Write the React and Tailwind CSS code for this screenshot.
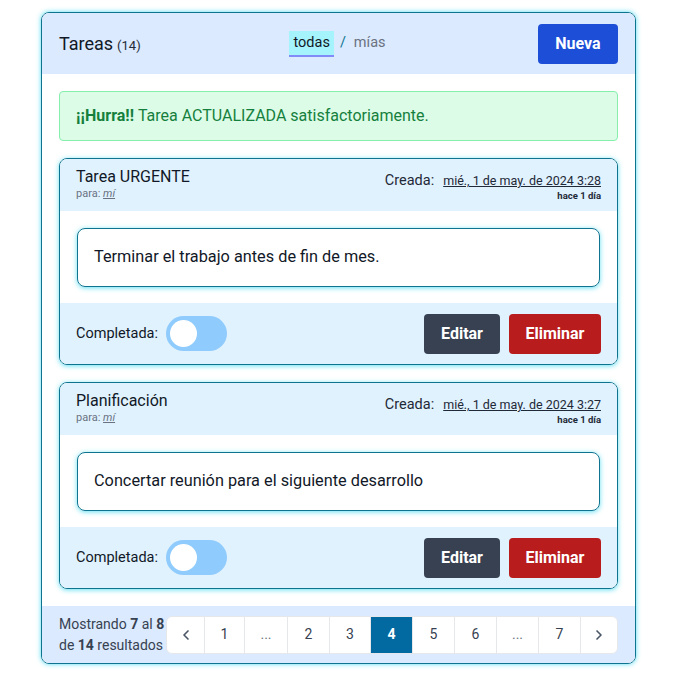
import React from "react";
import { ChevronLeft, ChevronRight } from "lucide-react";

function Toggle() {
  return (
    <div className="w-[61px] h-[35px] rounded-full bg-[#8fcbfd] flex items-center px-[4px]">
      <div className="w-[27px] h-[27px] rounded-full bg-white" />
    </div>
  );
}

function TaskCard({ title, date, text }) {
  return (
    <div className="rounded-lg border border-[#0e7490] shadow-[0_1px_5px_rgba(34,211,238,0.7)] overflow-hidden">
      <div className="bg-[#e0f2fe] h-[52px] px-4 flex justify-between items-start pt-[8px]">
        <div className="flex flex-col">
          <span className="text-[16px] leading-[20px] text-[#111827]">{title}</span>
          <span className="text-[11px] leading-[14px] text-gray-500">
            para: <span className="italic underline">mí</span>
          </span>
        </div>
        <div className="flex flex-col items-end pt-[5px]">
          <div className="flex items-baseline gap-[9px]">
            <span className="text-[14.5px] leading-[17px] text-[#1f2937]">Creada:</span>
            <span className="text-[12.5px] leading-[15px] text-[#1f2937] underline">{date}</span>
          </div>
          <span className="text-[9.5px] leading-[13px] font-bold text-[#1f2937]">hace 1 día</span>
        </div>
      </div>
      <div className="bg-white px-[17px] pt-[17px] pb-[16px]">
        <div className="h-[59px] rounded-lg border border-[#0e7490] shadow-[0_1px_5px_rgba(34,211,238,0.7)] px-4 flex items-center">
          <span className="text-[16.3px] text-[#111827]">{text}</span>
        </div>
      </div>
      <div className="bg-[#e0f2fe] h-[61px] px-4 flex items-center justify-between">
        <div className="flex items-center gap-[8px]">
          <span className="text-[14.5px] text-[#111827]">Completada:</span>
          <Toggle />
        </div>
        <div className="flex items-center gap-[9px]">
          <button className="h-[40px] w-[76px] rounded bg-[#374151] text-white font-bold text-[16px]">Editar</button>
          <button className="h-[40px] w-[92px] rounded bg-[#b91c1c] text-white font-bold text-[16px]">Eliminar</button>
        </div>
      </div>
    </div>
  );
}

export default function App() {
  const pages = [
    { l: "<", w: "w-[37px]", arrow: "left" },
    { l: "1", w: "w-[40px]" },
    { l: "...", w: "w-[43px]", dots: true },
    { l: "2", w: "w-[42px]" },
    { l: "3", w: "w-[41px]" },
    { l: "4", w: "w-[42px]", active: true },
    { l: "5", w: "w-[42px]" },
    { l: "6", w: "w-[42px]" },
    { l: "...", w: "w-[42px]", dots: true },
    { l: "7", w: "w-[42px]" },
    { l: ">", w: "w-[37px]", arrow: "right" },
  ];
  return (
    <div className="w-full min-h-[676px] bg-white pt-[12px] font-['Roboto',sans-serif]">
      <div className="w-[595px] ml-[41px] rounded-lg border border-[#0e7490] shadow-[0_0_5px_rgba(34,211,238,0.8)] overflow-hidden">
        <div className="bg-[#dbeafe] h-[61px] px-[17px] flex items-center justify-between">
          <div className="flex items-baseline gap-[4px] w-[200px]">
            <span className="text-[18px] text-[#111827]">Tareas</span>
            <span className="text-[13px] text-[#1f2937]">(14)</span>
          </div>
          <div className="flex items-center gap-[6px] text-[14.5px]">
            <span className="bg-[#a5f3fc] border-b-2 border-[#818cf8] px-[4px] h-[26px] flex items-center text-[#111827]">todas</span>
            <span className="text-[#0e7490] pb-[2px]">/</span>
            <span className="text-gray-500 px-[2px] pb-[2px]">mías</span>
          </div>
          <div className="w-[200px] flex justify-end">
            <button className="h-[40px] w-[80px] rounded bg-[#1d4ed8] text-white font-bold text-[16px]">Nueva</button>
          </div>
        </div>
        <div className="bg-white px-[17px] pt-[17px] pb-[17px] flex flex-col gap-[17px]">
          <div className="h-[50px] rounded border border-[#86efac] bg-[#dcfce7] px-4 flex items-center text-[16px] text-[#15803d]">
            <span className="font-bold">¡¡Hurra!!</span>
            <span>&nbsp;Tarea ACTUALIZADA satisfactoriamente.</span>
          </div>
          <TaskCard title="Tarea URGENTE" date="mié., 1 de may. de 2024 3:28" text="Terminar el trabajo antes de fin de mes." />
          <TaskCard title="Planificación" date="mié., 1 de may. de 2024 3:27" text="Concertar reunión para el siguiente desarrollo" />
        </div>
        <div className="bg-[#dbeafe] h-[57px] px-[17px] flex items-center justify-between">
          <div className="text-[14px] leading-[21px] text-[#374151]">
            <div>Mostrando <span className="font-bold">7</span> al <span className="font-bold">8</span></div>
            <div>de <span className="font-bold">14</span> resultados</div>
          </div>
          <div className="flex h-[38px] rounded-md border border-gray-200 bg-white overflow-hidden">
            {pages.map((p, i) => (
              <div
                key={i}
                className={`${p.w} h-full flex items-center justify-center text-[14px] ${i > 0 ? "border-l border-gray-200" : ""} ${p.active ? "bg-[#0369a1] text-white font-bold" : "text-[#374151]"} ${p.dots ? "text-[10px] text-gray-500" : ""}`}
              >
                {p.arrow === "left" ? (
                  <ChevronLeft size={16} strokeWidth={2.5} className="text-gray-600" />
                ) : p.arrow === "right" ? (
                  <ChevronRight size={16} strokeWidth={2.5} className="text-gray-600" />
                ) : (
                  p.l
                )}
              </div>
            ))}
          </div>
        </div>
      </div>
    </div>
  );
}
